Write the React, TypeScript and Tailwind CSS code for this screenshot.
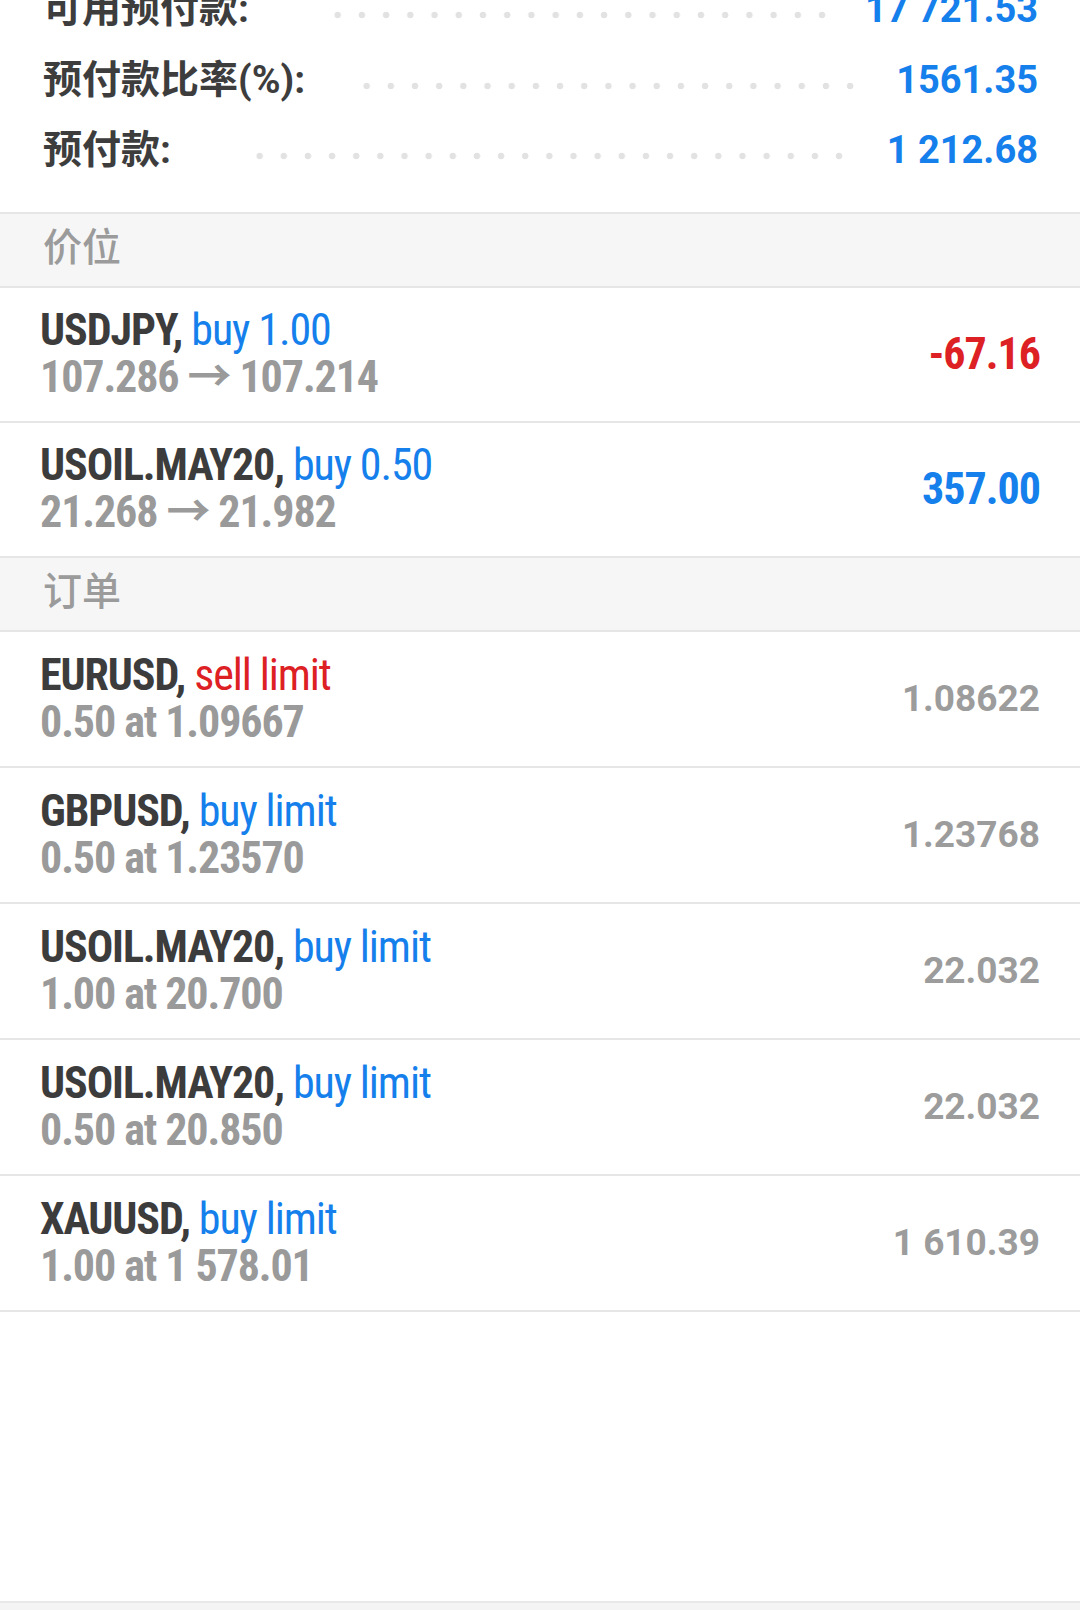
import React from "react";

const COND = "font-['Roboto_Condensed','Roboto','Noto_Sans_CJK_SC',sans-serif] font-stretch-condensed";
const ROBO = "font-['Roboto','Noto_Sans_CJK_SC',sans-serif]";

type Summary = { label: string; value: string; labelW: string; dotsW: string };

const summary: Summary[] = [
  { label: "可用预付款:", value: "17 721.53", labelW: "w-[283px]", dotsW: "w-[508px]" },
  { label: "预付款比率(%):", value: "1561.35", labelW: "w-[312px]", dotsW: "w-[507px]" },
  { label: "预付款:", value: "1 212.68", labelW: "w-[205px]", dotsW: "w-[603px]" },
];

type Pos = { sym: string; act: string; actColor: string; sub: string; value: string; valueColor: string };

const positions: Pos[] = [
  { sym: "USDJPY,", act: "buy 1.00", actColor: "text-[#1580ec]", sub: "107.286 → 107.214", value: "-67.16", valueColor: "text-[#dd2024]" },
  { sym: "USOIL.MAY20,", act: "buy 0.50", actColor: "text-[#1580ec]", sub: "21.268 → 21.982", value: "357.00", valueColor: "text-[#1580ec]" },
];

type Ord = { sym: string; act: string; actColor: string; sub: string; value: string };

const orders: Ord[] = [
  { sym: "EURUSD,", act: "sell limit", actColor: "text-[#dd2024]", sub: "0.50 at 1.09667", value: "1.08622" },
  { sym: "GBPUSD,", act: "buy limit", actColor: "text-[#1580ec]", sub: "0.50 at 1.23570", value: "1.23768" },
  { sym: "USOIL.MAY20,", act: "buy limit", actColor: "text-[#1580ec]", sub: "1.00 at 20.700", value: "22.032" },
  { sym: "USOIL.MAY20,", act: "buy limit", actColor: "text-[#1580ec]", sub: "0.50 at 20.850", value: "22.032" },
  { sym: "XAUUSD,", act: "buy limit", actColor: "text-[#1580ec]", sub: "1.00 at 1 578.01", value: "1 610.39" },
];

function SectionHeader({ title, top }: { title: string; top?: boolean }) {
  return (
    <div
      className={`${top ? "h-[76px] border-t-2" : "h-[74px]"} border-b-2 border-[#e6e6e6] bg-[#f6f6f6] flex items-center pl-[43px] pb-[10px]`}
    >
      <span className="font-['Noto_Sans_CJK_SC',sans-serif] font-medium text-[39px] leading-none text-[#9b9b9b]">
        {title}
      </span>
    </div>
  );
}

function TradeRow({
  sym,
  act,
  actColor,
  sub,
  right,
  pos,
}: {
  sym: string;
  act: string;
  actColor: string;
  sub: string;
  right: React.ReactNode;
  pos?: boolean;
}) {
  return (
    <div
      className={`flex items-center justify-between pl-[40px] pr-[40px] ${pos ? "h-[135px]" : "h-[136px]"} border-b-2 border-[#e6e6e6] bg-white`}
    >
      <div className={`${COND} text-[44px] leading-[47px] tracking-[-1.1px]`}>
        <div className="whitespace-nowrap">
          <span className="font-bold text-[#3c3c3c]">{sym}</span>{" "}
          <span className={`font-normal ${actColor}`}>{act}</span>
        </div>
        <div className="whitespace-nowrap font-bold text-[#9a9a9a]">{sub}</div>
      </div>
      {right}
    </div>
  );
}

export default function App() {
  return (
    <div className="w-[1080px] h-[1610px] overflow-hidden bg-white flex flex-col">
      {/* Summary (scrolled view, first row partly hidden) */}
      <div className="-mt-[26px] pb-[26px] pl-[43px] pr-[42px]">
        {summary.map((s) => (
          <div key={s.label} className="flex items-baseline h-[70.5px] leading-[70px]">
            <span className={`${ROBO} ${s.labelW} shrink-0 font-bold text-[39px] text-[#3d3d3d] whitespace-nowrap`}>
              {s.label}
            </span>
            <div
              className={`${s.dotsW} shrink-0 h-[14px] bg-[radial-gradient(circle,#e2e2e2_3px,transparent_3.6px)] bg-[length:23.33px_14px] bg-repeat-space`}
            />
            <span className={`${ROBO} flex-1 text-right font-bold text-[38px] text-[#1580ec] whitespace-nowrap`}>
              {s.value}
            </span>
          </div>
        ))}
      </div>

      <SectionHeader title="价位" top />
      {positions.map((p, i) => (
        <TradeRow
          key={i}
          pos
          sym={p.sym}
          act={p.act}
          actColor={p.actColor}
          sub={p.sub}
          right={
            <span className={`${COND} font-bold text-[44px] leading-none tracking-[-1px] ${p.valueColor}`}>
              {p.value}
            </span>
          }
        />
      ))}

      <SectionHeader title="订单" />
      {orders.map((o, i) => (
        <TradeRow
          key={i}
          sym={o.sym}
          act={o.act}
          actColor={o.actColor}
          sub={o.sub}
          right={<span className={`${ROBO} font-bold text-[37px] leading-none text-[#9c9c9c]`}>{o.value}</span>}
        />
      ))}

      <div className="flex-1 bg-white" />
      <div className="h-[9px] border-t-2 border-[#e8e8e8] bg-[#f4f4f4]" />
    </div>
  );
}
